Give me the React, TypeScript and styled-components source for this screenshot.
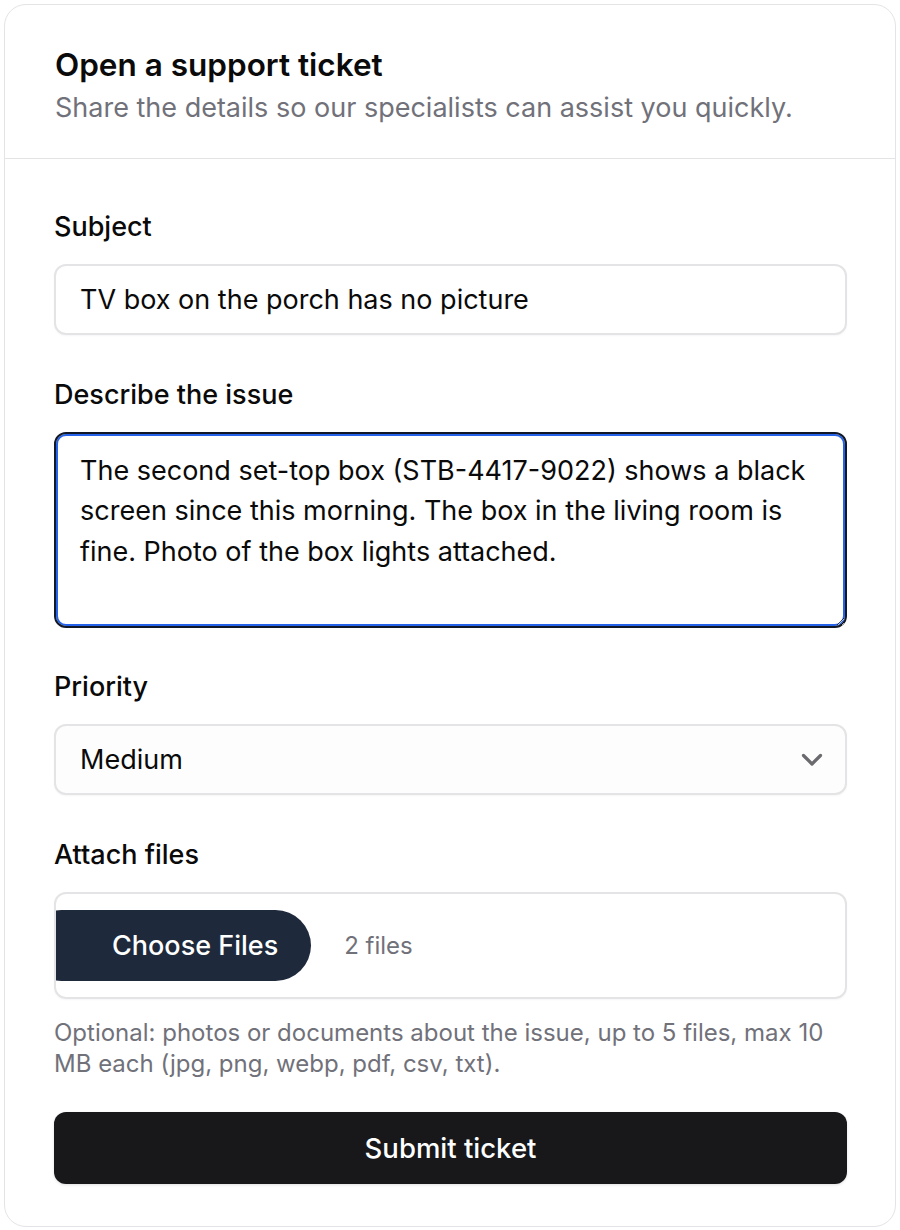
import React from 'react'
import styled, { createGlobalStyle } from 'styled-components'

const GlobalStyle = createGlobalStyle`
  * {
    box-sizing: border-box;
  }

  body {
    margin: 0;
    background: #ffffff;
    font-family: Inter, 'Noto Sans', sans-serif;
    color: #0a0a0a;
  }
`

const Card = styled.div`
  margin: 4px;
  width: 892px;
  border: 1.5px solid #e4e4e7;
  border-radius: 22px;
  background: #fff;
  overflow: hidden;
`

const Header = styled.header`
  padding: 41px 50px 32px;
  border-bottom: 1.5px solid #e4e4e7;
`

const Title = styled.h1`
  margin: 0;
  font-size: 31.5px;
  line-height: 38px;
  font-weight: 600;
  color: #0a0a0a;
`

const Subtitle = styled.p`
  margin: 6px 0 0;
  font-size: 27px;
  line-height: 36px;
  color: #71717a;
`

const Form = styled.form`
  padding: 51px 48px 42px 49px;
  display: flex;
  flex-direction: column;
`

const Field = styled.div`
  display: flex;
  flex-direction: column;
  margin-bottom: 42.5px;

  &:last-of-type {
    margin-bottom: 0;
  }
`

const Label = styled.label`
  font-size: 27px;
  line-height: 34px;
  font-weight: 500;
  color: #0a0a0a;
  margin-bottom: 20px;
`

const TextInput = styled.input`
  height: 71px;
  width: 100%;
  padding: 0 24px;
  border: 2px solid #e4e4e7;
  border-radius: 12px;
  font-family: inherit;
  font-size: 27px;
  color: #0a0a0a;
  background: #fff;
  box-shadow: 0 1px 2px rgba(0, 0, 0, 0.04);
  outline: none;
`

const TextArea = styled.textarea`
  display: block;
  width: 100%;
  height: 196px;
  padding: 17px 24px;
  border: 2px solid #111827;
  border-radius: 12px;
  box-shadow: inset 0 0 0 2px #2563eb;
  font-family: inherit;
  font-size: 27px;
  line-height: 40.5px;
  color: #0a0a0a;
  resize: vertical;
  outline: none;
`

const SelectWrap = styled.div`
  position: relative;
  width: 100%;
`

const Select = styled.select`
  appearance: none;
  width: 100%;
  height: 71px;
  padding: 0 60px 0 24px;
  border: 2px solid #e4e4e7;
  border-radius: 12px;
  background: #fdfdfd;
  font-family: inherit;
  font-size: 27px;
  color: #0a0a0a;
  box-shadow: 0 1px 2px rgba(0, 0, 0, 0.04);
  outline: none;
`

const Chevron = styled.svg`
  position: absolute;
  right: 24px;
  top: 50%;
  transform: translateY(-50%);
  pointer-events: none;
`

const FileBox = styled.div`
  display: flex;
  align-items: center;
  gap: 33px;
  height: 107px;
  border: 2px solid #e4e4e7;
  border-radius: 12px;
  overflow: hidden;
  box-shadow: 0 1px 2px rgba(0, 0, 0, 0.04);
`

const FileButton = styled.button`
  height: 71px;
  margin-left: -30px;
  padding: 0 33px 0 86px;
  border: none;
  border-radius: 999px;
  background: #1e293b;
  color: #fff;
  font-family: inherit;
  font-size: 27px;
  font-weight: 500;
  cursor: pointer;
`

const FileCount = styled.span`
  font-size: 24px;
  color: #71717a;
`

const Hint = styled.p`
  margin: 18px 0 0;
  font-size: 24px;
  line-height: 31px;
  color: #71717a;
`

const Submit = styled.button`
  margin-top: 33px;
  height: 72px;
  width: 100%;
  border: none;
  border-radius: 12px;
  background: #18181b;
  color: #fff;
  font-family: inherit;
  font-size: 27.5px;
  font-weight: 500;
  box-shadow: 0 1px 3px rgba(0, 0, 0, 0.12);
  cursor: pointer;
`

const App = () => {
  return (
    <>
      <GlobalStyle />
      <Card>
        <Header>
          <Title>Open a support ticket</Title>
          <Subtitle>Share the details so our specialists can assist you quickly.</Subtitle>
        </Header>
        <Form onSubmit={(e) => e.preventDefault()}>
          <Field>
            <Label htmlFor="subject">Subject</Label>
            <TextInput id="subject" defaultValue="TV box on the porch has no picture" />
          </Field>
          <Field>
            <Label htmlFor="issue">Describe the issue</Label>
            <TextArea
              id="issue"
              defaultValue="The second set-top box (STB-4417-9022) shows a black screen since this morning. The box in the living room is fine. Photo of the box lights attached."
            />
          </Field>
          <Field>
            <Label htmlFor="priority">Priority</Label>
            <SelectWrap>
              <Select id="priority" defaultValue="medium">
                <option value="low">Low</option>
                <option value="medium">Medium</option>
                <option value="high">High</option>
              </Select>
              <Chevron width="22" height="14" viewBox="0 0 22 14" fill="none">
                <path d="M2.5 2.5l8.5 8.5 8.5-8.5" stroke="#6b6b6f" strokeWidth="3.2" strokeLinecap="round" strokeLinejoin="round" />
              </Chevron>
            </SelectWrap>
          </Field>
          <Field>
            <Label>Attach files</Label>
            <FileBox>
              <FileButton type="button">Choose Files</FileButton>
              <FileCount>2 files</FileCount>
            </FileBox>
            <Hint>
              Optional: photos or documents about the issue, up to 5 files, max 10 MB each (jpg, png, webp, pdf, csv, txt).
            </Hint>
          </Field>
          <Submit type="submit">Submit ticket</Submit>
        </Form>
      </Card>
    </>
  )
}

export default App
